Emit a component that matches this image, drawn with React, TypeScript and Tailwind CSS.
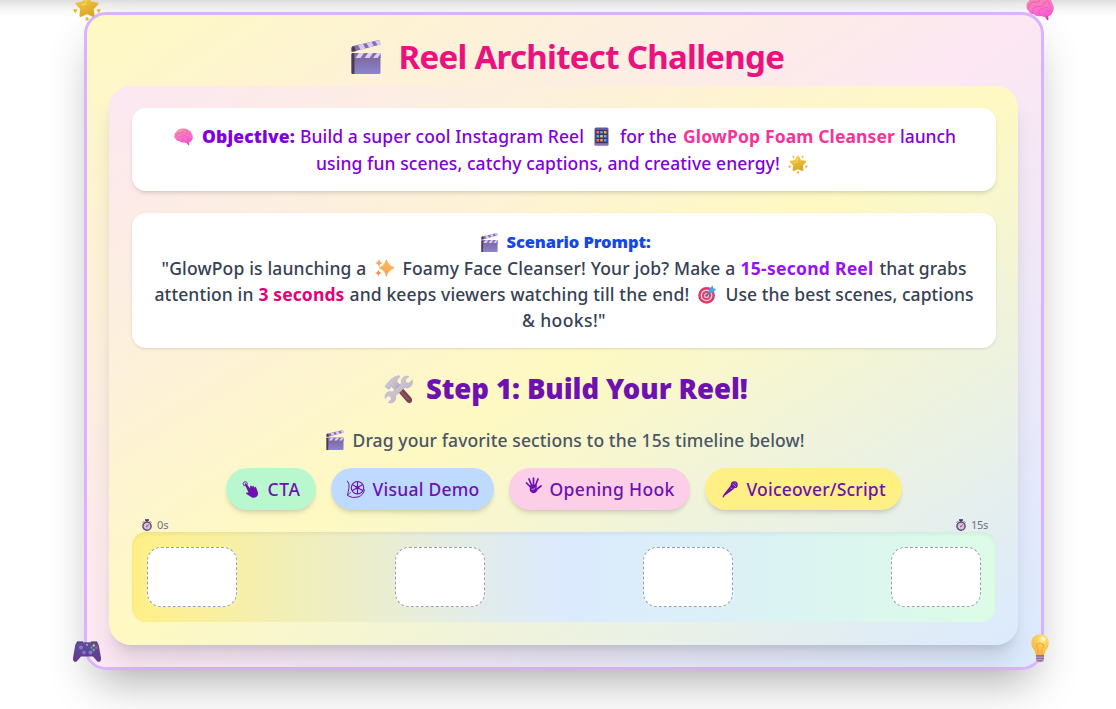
import type { ReactNode } from 'react';

type IconProps = { className?: string };

function Clapper({ className }: IconProps) {
  return (
    <svg viewBox="0 0 30 34" className={className}>
      <defs>
        <linearGradient id="clapBody" x1="0" y1="0" x2="0" y2="1">
          <stop offset="0" stopColor="#7d6091" />
          <stop offset="1" stopColor="#8a86cf" />
        </linearGradient>
      </defs>
      <rect x="0.5" y="13" width="29" height="21" rx="1.5" fill="url(#clapBody)" />
      <rect x="0.5" y="13" width="3" height="21" rx="1" fill="#4a3b58" />
      <path d="M3.5 13h26v5h-26z" fill="#8d68ad" />
      <path d="M8 13h5l-3.5 5h-5zM17 13h5l-3.5 5h-5zM26 13h3.5v1L26.500 18h-4.500z" fill="#d9d2fb" />
      <path d="M1 6.200 27 0.300q1.600-.2 2 1.200l.4 3.100L3 11.500q-2 .2-2.500-1.600z" fill="#8c6cab" />
      <path d="M7 4.900l5-1.200 2.500 4.700-5 1.400zM15.500 2.900l5-1.200 2.500 4.500-5 1.400zM24 1l3-.7 1.800.8.6 3.400-2.800.8z" fill="#d4ccf8" />
      <path d="M.5 7.500 3 5.900l2 5-4.500 1z" fill="#4a3b58" />
    </svg>
  );
}

function Brain({ className }: IconProps) {
  return (
    <svg viewBox="0 0 28 26" className={className}>
      <defs>
        <linearGradient id="brainFill" x1="0.3" y1="0" x2="0.6" y2="1">
          <stop offset="0" stopColor="#f08aa0" />
          <stop offset="0.6" stopColor="#fb72d0" />
          <stop offset="1" stopColor="#f759cf" />
        </linearGradient>
      </defs>
      <path d="M18 20.500l3 4.500q1.500 1 1.500-1l-.5-4z" fill="#e03fa8" />
      <path d="M3 6Q6 .5 13 .5q4-.5 7 1.500 5 1.500 6.500 6.500 2.500 5 0 9-1.500 4-6.500 4-3 .5-5.500-.5-4 1-7-2-3.500.5-5-3-2-1-2-4.500Q0 8 3 6z" fill="url(#brainFill)" />
      <path d="M2 13q3-7 8-6t3-4M6 18q0-7 6-6.500t7-4.500M14.500 20.500q-4-4 1-6.500t7-1M19 4q5 3 4.500 6M20 16q3 1 6-1" fill="none" stroke="#e25ca4" strokeWidth="0.800" strokeLinecap="round" />
      <path d="M6 5q3-3 7-2" fill="none" stroke="#fbb0ba" strokeWidth="1.100" strokeLinecap="round" />
    </svg>
  );
}

function Star({ className }: IconProps) {
  return (
    <svg viewBox="0 0 28 28" className={className}>
      <defs>
        <linearGradient id="starFill" x1="0" y1="0" x2="0.4" y2="1">
          <stop offset="0" stopColor="#f6cf45" />
          <stop offset="1" stopColor="#dba927" />
        </linearGradient>
      </defs>
      <path d="M14 3.500l3.300 6 6.900 1.200-4.700 5 .8 7-6.300-2.900-6.300 2.900.8-7-4.700-5 6.900-1.200z" fill="url(#starFill)" stroke="url(#starFill)" strokeWidth="2.500" strokeLinejoin="round" />
      <g fill="#e9b62d">
        <path d="M5.500 2.500l3.500.5-.5 4zM22.500 2.500L19 3l.5 4z" />
        <path d="M.5 16l4 .5-2 3.500q-2-1-2-4zM27.500 16l-4 .5 2 3.500q2-1 2-4z" />
        <path d="M14 23.500l2 2.500q-2 3-4 0z" />
      </g>
      <path d="M9 12l4-1M14 6l-1.500 3" stroke="#fbe27a" strokeWidth="1" strokeLinecap="round" />
    </svg>
  );
}

function Phone({ className }: IconProps) {
  const colors = ['#ef7d4b', '#4aa8ec', '#f3b548', '#54b4ee', '#f3c74f', '#58b7ee', '#ef7d4b', '#f09a4c', '#4aa8ec'];
  return (
    <svg viewBox="0 0 15 19" className={className}>
      <rect x="0.500" y="0.500" width="14" height="18" rx="1.500" fill="#6657a6" />
      <rect x="1.500" y="3" width="12" height="13" fill="#3f3263" />
      <rect x="0.500" y="16.500" width="14" height="2" rx="1" fill="#8e72b0" />
      {colors.map((color, i) => (
        <rect key={i} x={2.500 + (i % 3) * 3.700} y={4 + Math.floor(i / 3) * 4} width="2.600" height="2.600" rx="0.500" fill={color} />
      ))}
    </svg>
  );
}

function Sparkles({ className }: IconProps) {
  return (
    <svg viewBox="0 0 20 18" className={className}>
      <defs>
        <linearGradient id="sparkFill" x1="0" y1="0" x2="0" y2="1">
          <stop offset="0" stopColor="#fbc05e" />
          <stop offset="1" stopColor="#fb9a4e" />
        </linearGradient>
      </defs>
      <path d="M11.500 0.500q1.200 6 8 8.300-6.800 2.300-8 8.700-1.300-6.400-7.500-8.700 6.200-2.300 7.500-8.300z" fill="url(#sparkFill)" stroke="#fbb05a" strokeWidth="0.800" strokeLinejoin="round" />
      <path d="M4 .2q.7 2.800 3.500 3.800Q4.700 5 4 7.800 3.300 5 .5 4 3.300 3 4 .2z" fill="#fba65c" />
      <path d="M3.500 11q.6 2.100 2.700 2.900-2.100.9-2.700 3-.7-2.100-2.800-3 2.100-.8 2.800-2.900z" fill="#f98a55" />
    </svg>
  );
}

function Target({ className }: IconProps) {
  return (
    <svg viewBox="0 0 20 20" className={className}>
      <circle cx="9" cy="11" r="8.800" fill="#d93c66" />
      <circle cx="9" cy="11" r="6.200" fill="#e9cfe0" />
      <circle cx="9" cy="11" r="4.800" fill="#dc3f6b" />
      <circle cx="9" cy="11" r="2.700" fill="#e3c3dc" />
      <circle cx="9" cy="11" r="1.300" fill="#b9406f" />
      <path d="M9 11l6-6" stroke="#3b73a8" strokeWidth="1.300" />
      <path d="M11.500 7.500l.3-3.500L15.500.5l.6 3 3 .6-3.500 4-3.500.3z" fill="#45a3ea" />
    </svg>
  );
}

function Tools({ className }: IconProps) {
  return (
    <svg viewBox="0 0 29 29" className={className}>
      <defs>
        <linearGradient id="steel" x1="0" y1="0" x2="1" y2="1">
          <stop offset="0" stopColor="#dcd6e4" />
          <stop offset="1" stopColor="#b5abbf" />
        </linearGradient>
      </defs>
      <path d="M10 12l4-4 13.500 15q1.500 3-.5 4.500t-4-.5z" fill="#7c4054" />
      <path d="M12 11l13 14" stroke="#9a5968" strokeWidth="1.300" />
      <path d="M.8 11.500L4 7.500q5-6.500 11-7l1 1.500q-3.500 2-3 5l2.500 2.500-5 5-3-3-2.500 3z" fill="url(#steel)" stroke="#b4a9c0" strokeWidth="0.500" />
      <path d="M25 1.500l-3.700 3.200.6 3 3 .5L28.300 5q1 4.500-2 6.700-2.600 2-5.600.8L11.500 21q1 3.600-1.300 5.600-2.700 2.200-6 .8l3.300-3.100-.8-3-3-.5-2.500 2.800q-.8-4 1.800-6 2.500-1.700 5.300-.6L17.500 8q-.8-3.500 1.500-5.500Q21.700.3 25 1.500z" fill="url(#steel)" stroke="#b8adc4" strokeWidth="0.600" />
    </svg>
  );
}

function Gamepad({ className }: IconProps) {
  return (
    <svg viewBox="0 0 28 21" className={className}>
      <defs>
        <linearGradient id="padFill" x1="0" y1="0" x2="0" y2="1">
          <stop offset="0" stopColor="#5b5296" />
          <stop offset="1" stopColor="#66368f" />
        </linearGradient>
      </defs>
      <path d="M4 .5h6v3H3zM18 .5h6l1 3h-7z" fill="#34244a" />
      <path d="M5.500 1.200h17q2.500 0 3.300 3L28 17q.2 4-2 4-1.500 0-3-2l-3-3.500H8L5 19q-1.500 2-3 2-2.200 0-2-4L2.200 4.200q.8-3 3.300-3z" fill="url(#padFill)" />
      <circle cx="8" cy="6.500" r="2" fill="#8579d7" />
      <circle cx="17.500" cy="11.500" r="2" fill="#8579d7" />
      <path d="M11 9.500v4M9 11.500h4" stroke="#8579d7" strokeWidth="1.300" />
      <circle cx="14" cy="3.700" r="1" fill="#b7a9b9" />
      <circle cx="20.800" cy="4.500" r="1.200" fill="#f4c35a" />
      <circle cx="18.500" cy="6.700" r="1.200" fill="#439ceb" />
      <circle cx="23.300" cy="6.700" r="1.200" fill="#ef4a64" />
      <circle cx="20.800" cy="9" r="1.200" fill="#4cc77b" />
    </svg>
  );
}

function Bulb({ className }: IconProps) {
  return (
    <svg viewBox="0 0 18 28" className={className}>
      <defs>
        <radialGradient id="bulbFill" cx="0.65" cy="0.25" r="0.8">
          <stop offset="0" stopColor="#fff1a0" />
          <stop offset="0.400" stopColor="#fccf55" />
          <stop offset="1" stopColor="#fbb53e" />
        </radialGradient>
      </defs>
      <path d="M5 20.500h8V26l-2 1.800H7L5 26z" fill="#8f7098" />
      <path d="M5 23.200h8M5 25.700h8" stroke="#c3a9c4" strokeWidth="0.900" />
      <path d="M9 .3q8.500.4 8.700 8.700 0 4-2.700 7-1.600 1.800-1.700 5H4.700q-.1-3.200-1.700-5Q.3 13 .3 9 .5.7 9 .3z" fill="url(#bulbFill)" />
      <path d="M7 21V14.500Q4.500 13 5.500 10.500 9 7.500 12.500 10.500q1 2.500-1.500 4V21" fill="none" stroke="#f39b45" strokeWidth="1" />
      <ellipse cx="12.300" cy="4.700" rx="2.300" ry="1.600" transform="rotate(35 12.300 4.700)" fill="#fffadf" />
    </svg>
  );
}

function Stopwatch({ className }: IconProps) {
  return (
    <svg viewBox="0 0 10 12" className={className}>
      <path d="M3 .3h4v1.400H5.700V3H4.300V1.700H3z" fill="#3b2c50" />
      <path d="M8 2.300l1.200 1.200M2 2.300L.8 3.500" stroke="#54406b" strokeWidth="1" />
      <circle cx="5" cy="7.200" r="4.100" fill="#d3c3e0" stroke="#5b4670" strokeWidth="1.400" />
      <path d="M4.600 7.800L7 5.200" stroke="#e1386d" strokeWidth="1" />
      <circle cx="4.800" cy="7.500" r="0.800" fill="#8a5685" />
    </svg>
  );
}

function PointingHand({ className }: IconProps) {
  return (
    <svg viewBox="0 0 17 17" className={className} fill="currentColor">
      <circle cx="3.200" cy="2.800" r="2.100" fill="none" stroke="currentColor" strokeWidth="0.900" />
      <path d="M2.500 2.800q.8-1 1.800 0L8 7.200 8.200 5q.9-1 1.500 0l.5 1.600.2-1.400q.9-.9 1.500.2l.5 1.700.3-1.200q.9-.6 1.400.5L16 11.500q.4 3-1.500 4.300-2.500 1.600-5 .4L4.200 12.800q-.6-1.300.8-1.400l1.500.2z" />
    </svg>
  );
}

function FilmReel({ className }: IconProps) {
  return (
    <svg viewBox="0 0 19 19" className={className} fill="none" stroke="currentColor">
      <circle cx="11.500" cy="7.700" r="6.200" strokeWidth="1.100" />
      <circle cx="11.500" cy="7.700" r="1.500" fill="currentColor" strokeWidth="0.600" />
      <path d="M11.500 1.500v12.400M6.100 4.600l10.800 6.200M6.100 10.800l10.800-6.200" strokeWidth="1.100" />
      <path d="M1.300.8q2.500 3 1.700 7T1.500 15.500Q6.500 18.800 12 17t6.500-7.500" strokeWidth="1" />
      <path d="M1.500 15q2-1 3.500-3" strokeWidth="0.700" />
    </svg>
  );
}

function SpreadHand({ className }: IconProps) {
  return (
    <svg viewBox="0 0 17 17" className={className} fill="none" stroke="currentColor" strokeLinecap="round">
      <path d="M5.500 10L1.500 6M6.700 8.500L4 2M8.500 8V1M10.500 8.500L13 2M11.500 12.500L16 9" strokeWidth="1.700" />
      <path d="M5 8.500q3.500-2 7 0l-.5 3.500 1 1q-1.500 3.300-4.500 3.200-2.500-.2-3.300-3z" fill="currentColor" stroke="none" />
      <path d="M7 12.500q2 .5 3-1.500" stroke="#fccee8" strokeWidth="0.700" />
    </svg>
  );
}

function Microphone({ className }: IconProps) {
  return (
    <svg viewBox="0 0 16 17" className={className} fill="currentColor">
      <circle cx="12.300" cy="3.700" r="3.500" />
      <path d="M8.800 4.200l3.400 3.500L3 14.500 1.300 16.700l-.8-.6 1.200-2.500z" />
      <path d="M10.500 2.500l3.500 3.500M12.300 1.500l2 2M8.600 6.500l1.400 1.500" stroke="#fff085" strokeWidth="0.500" />
    </svg>
  );
}

function Line({ className = '', children }: { className?: string; children: ReactNode }) {
  return <div className={`flex items-center justify-center whitespace-nowrap ${className}`}>{children}</div>;
}

function Slot() {
  return <div className="h-15 w-[90px] rounded-[14px] border border-dashed border-[#99a1af] bg-white" />;
}

const pill = 'flex h-[42px] items-center rounded-full shadow-[0_4px_5px_-1px_rgba(0,0,0,0.12),0_2px_3px_-2px_rgba(0,0,0,0.12)] whitespace-nowrap';

export default function App() {
  return (
    <div className="h-[709px] overflow-hidden bg-white bg-[linear-gradient(to_bottom,#dedede_0px,#ececec_5px,#f8f8f8_11px,#ffffff_17px)] pt-3 pl-[84px] font-['Noto_Sans','Open_Sans',sans-serif] text-[17.5px] font-medium">
      <main className="relative h-[658px] w-[960px] rounded-[22px] border-3 border-[#dab2ff] bg-linear-to-br from-[#fef9c2] via-[#fce7f3] to-[#dbeafe] px-[22px] shadow-[0_22px_45px_-11px_rgba(0,0,0,0.32)]">
        <Star className="absolute -top-[22px] -left-[14px] size-7" />
        <Brain className="absolute -top-[20px] -right-[13px] h-[26px] w-7" />
        <Gamepad className="absolute -bottom-[5px] -left-[14px] h-[21px] w-7 -translate-y-[10px]" />
        <Bulb className="absolute bottom-[5px] -right-[8px] h-7 w-[18px]" />

        <h1 className="flex h-[71px] items-center justify-center pt-3 pl-[6px] whitespace-nowrap text-[#e9127f]">
          <Clapper className="mr-[18px] h-[34px] w-[30px]" />
          <span className="w-[385px] text-[33px] font-bold tracking-[-0.7px]">Reel Architect Challenge</span>
        </h1>

        <section className="h-[559px] w-[909px] rounded-[22px] bg-linear-to-br from-[#fce7f3] via-[#fef9c2] to-[#dbeafe] px-[23px] pt-[22px] shadow-[0_18px_22px_-4px_rgba(0,0,0,0.12),0_7px_9px_-5px_rgba(0,0,0,0.1)]">
          <div className="h-[83px] w-[864px] rounded-[14px] bg-white pt-[15px] text-[#8200db] shadow-[0_3px_5px_-1px_rgba(0,0,0,0.13),0_2px_3px_-2px_rgba(0,0,0,0.1)]">
            <Line className="h-[27px]">
              <Brain className="mr-[9px] ml-0.5 h-[18px] w-[19px]" />
              <strong className="w-[93px] font-black tracking-[0.15px]">Objective:</strong>
              <span className="ml-[5px] w-[284px] tracking-[0.1px]">Build a super cool Instagram Reel</span>
              <Phone className="mr-[11px] ml-[10px] h-[19px] w-[15px]" />
              <span className="w-[57px] tracking-[0.05px]">for the</span>
              <span className="ml-[6px] w-[212px] font-bold tracking-[0.13px] text-[#f6339a]">GlowPop Foam Cleanser</span>
              <span className="ml-[5px] w-14 tracking-[-0.04px]">launch</span>
            </Line>
            <Line className="h-[27px]">
              <span className="w-[464px] tracking-[0.09px]">using fun scenes, catchy captions, and creative energy!</span>
              <Star className="mr-[4px] ml-2 size-5" />
            </Line>
          </div>

          <div className="mt-[22px] h-[135px] w-[864px] rounded-[14px] bg-white pt-4 text-[#364153] shadow-[0_1px_3px_rgba(0,0,0,0.12)]">
            <Line className="h-[26px]">
              <Clapper className="mr-[9px] ml-[3px] h-[19px] w-[17px]" />
              <strong className="w-36 text-[16.5px] font-black tracking-[-0.1px] text-[#1447e6]">Scenario Prompt:</strong>
            </Line>
            <Line className="h-[26px]">
              <span className="w-[205px] tracking-[0.16px]">"GlowPop is launching a</span>
              <Sparkles className="mr-2 ml-[8px] h-[18px] w-5" />
              <span className="w-[333px] tracking-[0.16px]">Foamy Face Cleanser! Your job? Make a</span>
              <span className="ml-[5px] w-[133px] font-bold tracking-[0.26px] text-[#9810fa]">15-second Reel</span>
              <span className="ml-[6px] w-[87px] tracking-[0.08px]">that grabs</span>
            </Line>
            <Line className="h-[26px]">
              <span className="w-[99px] tracking-[0.1px]">attention in</span>
              <span className="ml-[5px] w-[86px] font-bold tracking-[0.11px] text-[#e60076]">3 seconds</span>
              <span className="ml-[5px] w-[340px] tracking-[0.14px]">and keeps viewers watching till the end!</span>
              <Target className="mr-[9px] ml-2 h-[19px] w-[19px]" />
              <span className="w-[248px] tracking-[0.07px]">Use the best scenes, captions</span>
            </Line>
            <Line className="h-[26px]">
              <span className="w-[84px] tracking-[0.4px]">&amp; hooks!"</span>
            </Line>
          </div>

          <h2 className="mt-[22px] flex h-[38px] items-center justify-center pl-[4px] whitespace-nowrap text-[#6e11b0]">
            <Tools className="mr-[13px] h-[29px] w-[29px]" />
            <span className="w-[321px] text-[27.5px] font-black tracking-[-0.08px]">Step 1: Build Your Reel!</span>
          </h2>
          <Line className="mt-[18px] h-[27px] pt-px pl-[3px] text-[#4a5565]">
            <Clapper className="mr-[9px] h-5 w-[18px]" />
            <span className="w-[452px] tracking-[0.11px]">Drag your favorite sections to the 15s timeline below!</span>
          </Line>

          <div className="mt-[15px] flex justify-center gap-[15px] text-[#6e11b0]">
            <div className={`${pill} w-[90px] bg-[#b9f8cf] pl-4`}>
              <PointingHand className="mr-[9px] size-[17px]" />
              <span className="tracking-[0.6px]">CTA</span>
            </div>
            <div className={`${pill} w-[163px] bg-[#bedbff] pl-[15px]`}>
              <FilmReel className="mr-2 size-[19px]" />
              <span className="tracking-[0.24px]">Visual Demo</span>
            </div>
            <div className={`${pill} w-[181px] bg-[#fccee8] pl-4`}>
              <SpreadHand className="mr-2 mb-2 size-[17px]" />
              <span className="tracking-[0.36px]">Opening Hook</span>
            </div>
            <div className={`${pill} w-[197px] bg-[#fff085] pl-[17px]`}>
              <Microphone className="mr-[9px] h-[17px] w-4" />
              <span className="tracking-[0.2px]">Voiceover/Script</span>
            </div>
          </div>

          <div className="mt-[7px] flex h-[15px] items-center justify-between pt-px pr-[7px] pl-[10px] text-[11px] font-normal text-[#6a7282]">
            <span className="flex items-center gap-[5px]"><Stopwatch className="h-3 w-[10px]" />0s</span>
            <span className="flex items-center gap-[5px]"><Stopwatch className="h-3 w-[10px]" /><span className="tracking-[-0.28px]">15s</span></span>
          </div>
          <div className="flex h-[90px] w-[864px] items-center justify-between rounded-[14px] bg-linear-to-r from-[#fff085] via-[#dbeafe] to-[#dcfce7] px-[15px] shadow-[inset_0_2px_4px_rgba(0,0,0,0.06)]">
            <Slot />
            <Slot />
            <Slot />
            <Slot />
          </div>
        </section>
      </main>
    </div>
  );
}
